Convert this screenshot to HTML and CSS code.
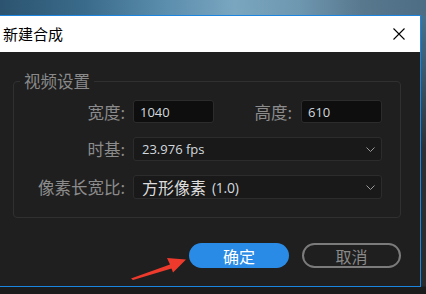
FILE: index.html
```html
<!DOCTYPE html>
<html lang="zh-CN">
<head>
<meta charset="utf-8">
<title>新建合成</title>
<link rel="stylesheet" href="styles.css">
</head>
<body>
<div class="desk">
  <div class="dialog">
    <div class="titlebar">
      <span class="title">新建合成</span>
      <span class="close">
        <svg width="12" height="12" viewBox="0 0 12 12"><path d="M0.5 0.5 L11.5 11.5 M11.5 0.5 L0.5 11.5" stroke="#000" stroke-width="1.1" fill="none"/></svg>
      </span>
    </div>
    <div class="body">
      <fieldset class="group">
        <legend class="legend">视频设置</legend>
        <div class="form">
          <span class="lbl">宽度:</span>
          <div class="pair">
            <div class="input">1040</div>
            <span class="lbl lbl-mid">高度:</span>
            <div class="input">610</div>
          </div>
          <span class="lbl">时基:</span>
          <div class="select">
            <span class="val">23.976 fps</span>
            <svg class="chev" width="9" height="5" viewBox="0 0 9 5"><path d="M0.5 0.5 L4.5 4.5 L8.5 0.5" stroke="#9a9a9a" stroke-width="1" fill="none"/></svg>
          </div>
          <span class="lbl">像素长宽比:</span>
          <div class="select">
            <span class="val"><span class="cjk">方形像素</span><span class="ratio">(1.0)</span></span>
            <svg class="chev" width="9" height="5" viewBox="0 0 9 5"><path d="M0.5 0.5 L4.5 4.5 L8.5 0.5" stroke="#9a9a9a" stroke-width="1" fill="none"/></svg>
          </div>
        </div>
      </fieldset>
      <div class="actions">
        <button class="btn btn-primary">确定</button>
        <button class="btn btn-secondary">取消</button>
      </div>
    </div>
  </div>
  <svg class="arrow" width="426" height="294" viewBox="0 0 426 294">
    <polygon points="131,278.5 170,264.5 167,258 186,259.5 173,272.5 171.5,268.5 133,280" fill="#ee3a2c"/>
  </svg>
</div>
</body>
</html>
```
FILE: styles.css
```css
html, body {
  margin: 0;
  padding: 0;
}
body {
  width: 426px;
  height: 294px;
  overflow: hidden;
  background: #1b1b1b;
}
.desk {
  position: relative;
  width: 426px;
  height: 294px;
  padding-top: 15px;
  box-sizing: border-box;
  background:
    linear-gradient(90deg, #2c5470 0%, #3a6b8a 20%, #5d8fae 40%, #7aa6c0 55%, #6e97b0 70%, #58788e 85%, #4c6d84 100%) top left / 100% 16px no-repeat,
    linear-gradient(180deg, #4a7896 0px, #3c5f76 60px, #2c2f33 150px, #2a2a2a 286px, #1b1b1b 287px) top left / 100% 100% no-repeat;
}
.dialog {
  width: 420px;
  border: 1px solid #1c85e0;
  border-left: none;
  display: flex;
  flex-direction: column;
}
.titlebar {
  height: 36px;
  background: #ffffff;
  display: flex;
  align-items: center;
  justify-content: space-between;
  padding: 0 15px 0 3px;
}
.title {
  font-family: "Noto Sans CJK SC", sans-serif;
  font-size: 15px;
  color: #000;
  line-height: 20px;
}
.close {
  display: flex;
  width: 12px;
  height: 12px;
}
.body {
  height: 234px;
  box-sizing: border-box;
  background: #1f1f1f;
  padding: 19px 19px 18px 13px;
  display: flex;
  flex-direction: column;
}
.group {
  margin: 0;
  width: 388px;
  box-sizing: border-box;
  min-inline-size: 0;
  border: 1px solid #303030;
  border-radius: 4px;
  padding: 9px 18px 18px 0;
}
.legend {
  margin-left: 6px;
  padding: 0 4px;
  font-family: "Noto Sans CJK SC", sans-serif;
  font-size: 16.5px;
  line-height: 20px;
  color: #8a8a8a;
}
.form {
  display: grid;
  grid-template-columns: 111px 249px;
  column-gap: 8px;
  row-gap: 14px;
  align-items: center;
}
.lbl {
  font-family: "Noto Sans CJK SC", sans-serif;
  font-size: 16.5px;
  line-height: 20px;
  color: #8c8c8c;
  text-align: right;
}
.pair {
  display: flex;
  align-items: center;
}
.lbl-mid {
  flex: 1;
  margin-right: 9px;
}
.input {
  width: 81px;
  height: 23px;
  box-sizing: border-box;
  background: #0e0e0e;
  border: 1px solid #2c2c2c;
  border-radius: 3px;
  padding-left: 6px;
  font-family: "Open Sans", "Noto Sans CJK SC", sans-serif;
  font-size: 13px;
  color: #d2d8de;
  display: flex;
  align-items: center;
}
.select {
  height: 24px;
  box-sizing: border-box;
  background: #191919;
  border: 1px solid #2c2c2c;
  border-radius: 3px;
  padding: 0 6px 0 8px;
  display: flex;
  align-items: center;
  justify-content: space-between;
  font-family: "Open Sans", "Noto Sans CJK SC", sans-serif;
  font-size: 13px;
  color: #d2d8de;
}
.val {
  white-space: pre;
  display: flex;
  align-items: center;
}
.cjk {
  font-family: "Noto Sans CJK SC", sans-serif;
  font-size: 16px;
  color: #dcdcdc;
}
.ratio {
  font-size: 14px;
  letter-spacing: -0.3px;
  margin-left: 6px;
}
.chev {
  display: block;
}
.actions {
  margin-top: 25px;
  display: flex;
  justify-content: flex-end;
  gap: 13px;
}
.btn {
  height: 25px;
  box-sizing: border-box;
  border-radius: 13px;
  font-family: "Noto Sans CJK SC", sans-serif;
  font-size: 16px;
  line-height: 20px;
  padding: 0;
  display: flex;
  align-items: center;
  justify-content: center;
}
.btn-primary {
  width: 100px;
  background: #2a8be6;
  color: #ffffff;
  border: none;
}
.btn-secondary {
  width: 99px;
  background: transparent;
  color: #8a8a8a;
  border: 2px solid #7b7b7b;
}
.arrow {
  position: absolute;
  left: 0;
  top: 0;
  pointer-events: none;
}
```
